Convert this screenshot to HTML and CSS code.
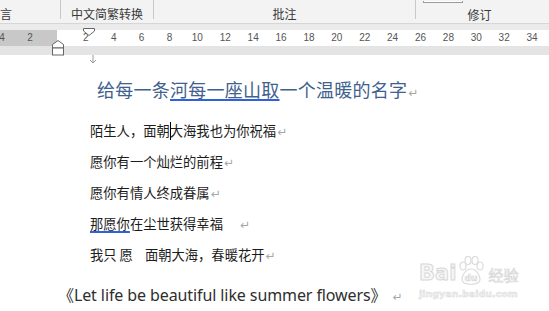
FILE: index.html
```html
<!DOCTYPE html>
<html lang="zh-CN">
<head>
  <meta charset="UTF-8" />
  <title>给每一条河每一座山取一个温暖的名字</title>
  <link rel="stylesheet" href="styles.css">
</head>
<body>
  <!-- 功能区底部的分组标签 -->
  <div class="ribbon">
    <div class="grp grp-lang"><span class="grp-label">言</span></div>
    <div class="sep"></div>
    <div class="grp grp-conv"><span class="grp-label">中文简繁转换</span></div>
    <div class="sep"></div>
    <div class="grp grp-note"><span class="grp-label">批注</span></div>
    <div class="sep"></div>
    <div class="grp grp-rev">
      <div class="stub"></div>
      <span class="grp-label">修订</span>
    </div>
  </div>
  <div class="ribbon-gap"></div>

  <!-- 标尺 -->
  <div class="ruler-wrap">
    <div class="ruler">
      <div class="ticks">
        <span>4</span><span>2</span><span></span><span>2</span><span>4</span><span>6</span><span>8</span>
        <span>10</span><span>12</span><span>14</span><span>16</span><span>18</span><span>20</span>
        <span>22</span><span>24</span><span>26</span><span>28</span><span>30</span><span>32</span>
        <span>34</span>
      </div>
    </div>
    <div class="ruler-foot"></div>
    <svg class="mark-first" width="12" height="8" viewBox="0 0 12 8">
      <path d="M0.5 0.5 H11.5 V3 L6 7.5 L0.5 3 Z" fill="#fff" stroke="#666" />
    </svg>
    <svg class="mark-hang" width="12" height="16" viewBox="0 0 12 16">
      <path d="M0.5 8 V4.5 L6 0.5 L11.5 4.5 V8 Z" fill="#fff" stroke="#666" />
      <rect x="0.5" y="8" width="11" height="7" fill="#fff" stroke="#666" />
    </svg>
  </div>

  <!-- 正文 -->
  <div class="page">
    <div class="page-top">
      <svg width="8" height="9" viewBox="0 0 8 9">
        <path d="M4 0 V8 M1 5 L4 8 L7 5" fill="none" stroke="#9a9a9a" />
      </svg>
    </div>

    <h1 class="title">给每一条<span class="mark">河每一座山取</span>一个温暖的名字<span class="ret">↵</span></h1>

    <p class="line">陌生人，面朝<span class="caret"></span>大海我也为你祝福<span class="ret">↵</span></p>
    <p class="line">愿你有一个灿烂的前程<span class="ret">↵</span></p>
    <p class="line">愿你有情人终成眷属<span class="ret">↵</span></p>
    <p class="line"><span class="mark">那愿你</span>在尘世获得幸福<span class="gap gap-l"></span><span class="ret">↵</span></p>
    <p class="line">我只<span class="gap gap-s"></span>愿<span class="gap gap-m"></span>面朝大海，春暖花开<span class="ret">↵</span></p>

    <p class="en"><span class="bk">《</span>Let life be beautiful like summer flowers<span class="bk">》</span><span class="ret">↵</span></p>

    <!-- 水印 -->
    <div class="wm">
      <div class="wm-row">
        <span class="wm-bai">Bai</span>
        <svg class="wm-paw" width="28" height="30" viewBox="0 0 28 30">
          <g fill="none" stroke="#dcdcdc" stroke-width="1.2">
            <ellipse cx="6" cy="10" rx="3" ry="4" />
            <ellipse cx="11" cy="4.5" rx="3" ry="4" />
            <ellipse cx="18" cy="4.5" rx="3" ry="4" />
            <ellipse cx="23" cy="10" rx="3" ry="4" />
            <path d="M14 13 C8 13 3 22 6 26 C9 29 19 29 22 26 C25 22 20 13 14 13 Z" />
          </g>
          <text x="14" y="25" text-anchor="middle" class="wm-du">du</text>
        </svg>
        <span class="wm-cn">经验</span>
      </div>
      <div class="wm-url">jingyan.baidu.com</div>
    </div>
  </div>
</body>
</html>
```

FILE: styles.css
```css
/* 全局 */
body {
  margin: 0;
  padding: 0;
  width: 549px;
  height: 311px;
  overflow: hidden;
  background-color: #fff;
  font-family: "Noto Sans", "Noto Sans CJK SC", sans-serif;
}

/* 功能区 */
.ribbon {
  display: flex;
  height: 23px;
  background-color: #f3f3f3;
  border-bottom: 1px solid #d6d6d6;
}
.grp {
  display: flex;
  justify-content: center;
}
.grp-label {
  padding-top: 6px;
  font-family: "Noto Sans CJK SC", sans-serif;
  font-size: 12px;
  line-height: 16px;
  color: #3a3a3a;
}
.grp-lang {
  width: 60px;
  justify-content: flex-start;
}
.grp-conv { width: 92px; }
.grp-note { width: 261px; }
.grp-rev {
  flex: 1;
  flex-direction: column;
  align-items: center;
}
.grp-rev .grp-label {
  padding-top: 4px;
  margin-left: -6px;
}
.stub {
  align-self: flex-start;
  margin-left: 7px;
  width: 38px;
  height: 1px;
  background-color: #fff;
  border: 1px solid #9a9a9a;
  border-top: none;
}
.sep {
  width: 1px;
  height: 19px;
  background-color: #c9c9c9;
}
.ribbon-gap {
  height: 6px;
  background-color: #ebebeb;
}

/* 标尺 */
.ruler-wrap {
  position: relative;
}
.ruler {
  height: 16px;
  overflow: hidden;
  background: linear-gradient(to right, #c8c8c8 57px, #fff 57px);
}
.ticks {
  display: flex;
  margin-left: -11.8px;
}
.ticks span {
  flex: 0 0 27.9px;
  text-align: center;
  font-family: "Liberation Sans", sans-serif;
  font-size: 10px;
  line-height: 16px;
  color: #555;
}
.ruler-foot {
  height: 9px;
  background-color: #e4e4e4;
}
.mark-first {
  position: absolute;
  left: 83px;
  top: -2px;
}
.mark-hang {
  position: absolute;
  left: 52px;
  top: 10px;
}

/* 页面 */
.page {
  position: relative;
}
.page-top {
  height: 9px;
  padding-left: 89px;
}
.page-top svg {
  display: block;
}
.title {
  margin: 13px 0 0 97px;
  font-family: "Noto Sans CJK SC", sans-serif;
  font-size: 18px;
  font-weight: 400;
  line-height: 24px;
  letter-spacing: 0.25px;
  color: #41618d;
  white-space: nowrap;
}
.mark {
  text-decoration: underline;
  text-decoration-color: #2f62d8;
  text-decoration-thickness: 2px;
  text-underline-offset: 2px;
}
.line {
  margin: 0 0 0 90px;
  font-family: "Noto Sans CJK SC", sans-serif;
  font-size: 13.3px;
  line-height: 31px;
  color: #1c1c1c;
  white-space: nowrap;
}
.title + .line {
  margin-top: 14px;
}
.caret {
  display: inline-block;
  width: 1px;
  height: 18px;
  margin-right: -1px;
  vertical-align: -4px;
  background-color: #000;
}
.gap {
  display: inline-block;
  height: 1px;
}
.gap-s { width: 3px; }
.gap-m { width: 12px; }
.gap-l { width: 16px; }
.ret {
  margin-left: 1px;
  font-family: "DejaVu Sans", sans-serif;
  font-size: 12px;
  line-height: 1;
  color: #a8a8a8;
  letter-spacing: 0;
}
.en {
  margin: 13px 0 0 58px;
  font-family: "Noto Sans", sans-serif;
  font-size: 16px;
  line-height: 24px;
  letter-spacing: -0.1px;
  color: #2e2e2e;
  white-space: nowrap;
}
.en .bk {
  font-family: "Noto Sans CJK SC", sans-serif;
  line-height: 1;
}
.en .ret {
  margin-left: 6px;
  font-size: 12px;
}

/* 百度经验水印 */
.wm {
  position: absolute;
  left: 419px;
  top: 201px;
  color: #ededed;
}
.wm-row {
  display: flex;
  align-items: flex-end;
}
.wm-bai {
  font-family: "DejaVu Sans", sans-serif;
  font-size: 21px;
  font-weight: 700;
  line-height: 22px;
  color: #f6f6f6;
  -webkit-text-stroke: 1px #d8d8d8;
}
.wm-paw {
  margin: 0 3px -2px 1px;
}
.wm-du {
  font-family: "DejaVu Sans", sans-serif;
  font-size: 9px;
  font-weight: 700;
  fill: #f6f6f6;
  stroke: #d4d4d4;
  stroke-width: 0.6;
}
.wm-cn {
  font-family: "Noto Sans CJK SC", sans-serif;
  font-size: 15px;
  line-height: 18px;
  color: #f6f6f6;
  -webkit-text-stroke: 0.7px #d8d8d8;
}
.wm-url {
  margin-top: 4px;
  font-family: "DejaVu Sans", sans-serif;
  font-size: 9.5px;
  font-weight: 700;
  color: #f2f2f2;
  -webkit-text-stroke: 0.5px #dadada;
}
```
